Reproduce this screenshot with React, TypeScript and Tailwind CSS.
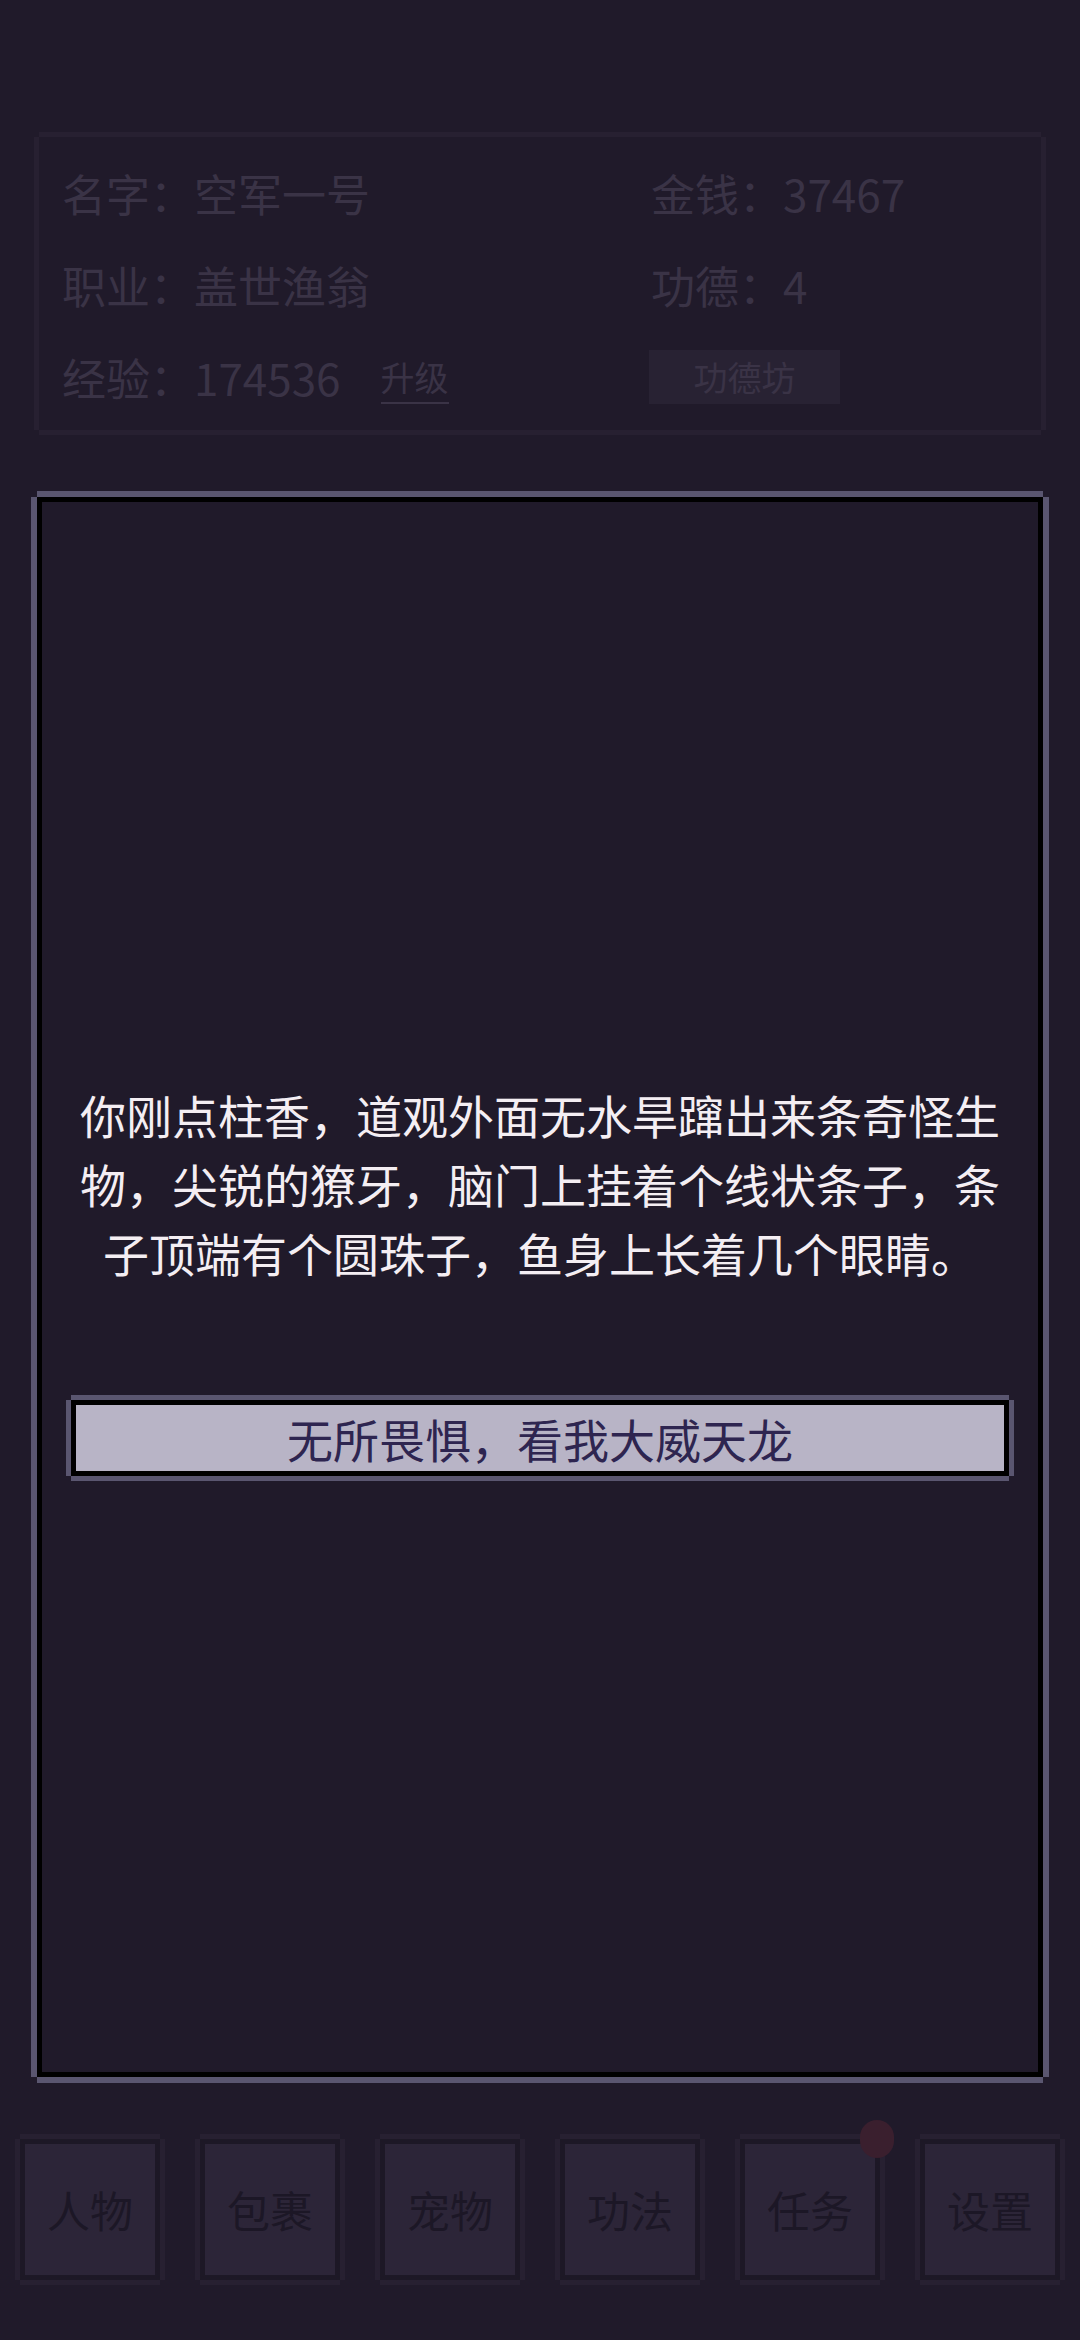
import React from "react";

const font = { fontFamily: '"Noto Sans CJK SC", "Noto Sans", sans-serif' };

function NavButton({ label, dot }: { label: string; dot?: boolean }) {
  return (
    <div className="flex justify-center">
      <div className="relative w-[140px] h-[141px] border-[5px] border-[#1d1826] bg-[#2c2538] shadow-[0_-5px_0_0_#272031,0_5px_0_0_#272031,-5px_0_0_0_#272031,5px_0_0_0_#272031] flex items-center justify-center">
        <span className="text-[43px] leading-none text-[#1c1726]">{label}</span>
        {dot && (
          <div className="absolute -top-[24px] -right-[19px] w-[34px] h-[38px] rounded-full bg-[#3a1f2e]" />
        )}
      </div>
    </div>
  );
}

export default function App() {
  return (
    <div
      className="w-[1080px] h-[2340px] bg-[#201a2a] flex flex-col overflow-hidden"
      style={font}
    >
      {/* Top info card */}
      <div className="mx-[39px] mt-[137px] h-[293px] shadow-[0_-5px_0_0_#272031,0_5px_0_0_#272031,-5px_0_0_0_#272031,5px_0_0_0_#272031] pt-[10px] pl-[23px] text-[#3a3346]">
        <div className="grid grid-cols-[589px_1fr]">
          <div className="h-[92px] flex items-center text-[44px] leading-none">名字：空军一号</div>
          <div className="h-[92px] flex items-center text-[44px] leading-none">金钱：37467</div>
          <div className="h-[92px] flex items-center text-[44px] leading-none">职业：盖世渔翁</div>
          <div className="h-[92px] flex items-center text-[44px] leading-none">功德：4</div>
          <div className="h-[92px] flex items-center text-[44px] leading-none">
            <span>经验：174536</span>
            <span className="ml-[40px] text-[34px] leading-none pb-[8px] border-b-[2px] border-[#3a3346] mt-[10px]">升级</span>
          </div>
          <div className="h-[92px] flex items-center">
            <div className="w-[191px] h-[54px] -ml-[2px] bg-[#282233] flex items-center justify-center text-[34px] leading-none">
              功德坊
            </div>
          </div>
        </div>
      </div>

      {/* Dialog */}
      <div className="mx-[37px] mt-[67px] h-[1580px] border-[5px] border-black bg-[#201a2a] shadow-[0_-6px_0_0_#5a5670,0_6px_0_0_#5a5670,-6px_0_0_0_#5a5670,6px_0_0_0_#5a5670] flex flex-col items-center justify-center pb-[18px]">
        <p className="w-[922px] text-center text-[46px] leading-[69px] text-[#f4eef3]">
          你刚点柱香，道观外面无水旱蹿出来条奇怪生物，尖锐的獠牙，脑门上挂着个线状条子，条子顶端有个圆珠子，鱼身上长着几个眼睛。
        </p>
        <div className="mt-[113px] w-[938px] h-[76px] border-[5px] border-black bg-[#b8b4c6] shadow-[0_-5px_0_0_#5a5670,0_5px_0_0_#5a5670,-5px_0_0_0_#5a5670,5px_0_0_0_#5a5670] flex items-center justify-center">
          <span className="text-[46px] leading-none text-[#2e2550]">无所畏惧，看我大威天龙</span>
        </div>
      </div>

      {/* Bottom nav */}
      <div className="mt-[62px] grid grid-cols-6">
        <NavButton label="人物" />
        <NavButton label="包裹" />
        <NavButton label="宠物" />
        <NavButton label="功法" />
        <NavButton label="任务" dot />
        <NavButton label="设置" />
      </div>
    </div>
  );
}
